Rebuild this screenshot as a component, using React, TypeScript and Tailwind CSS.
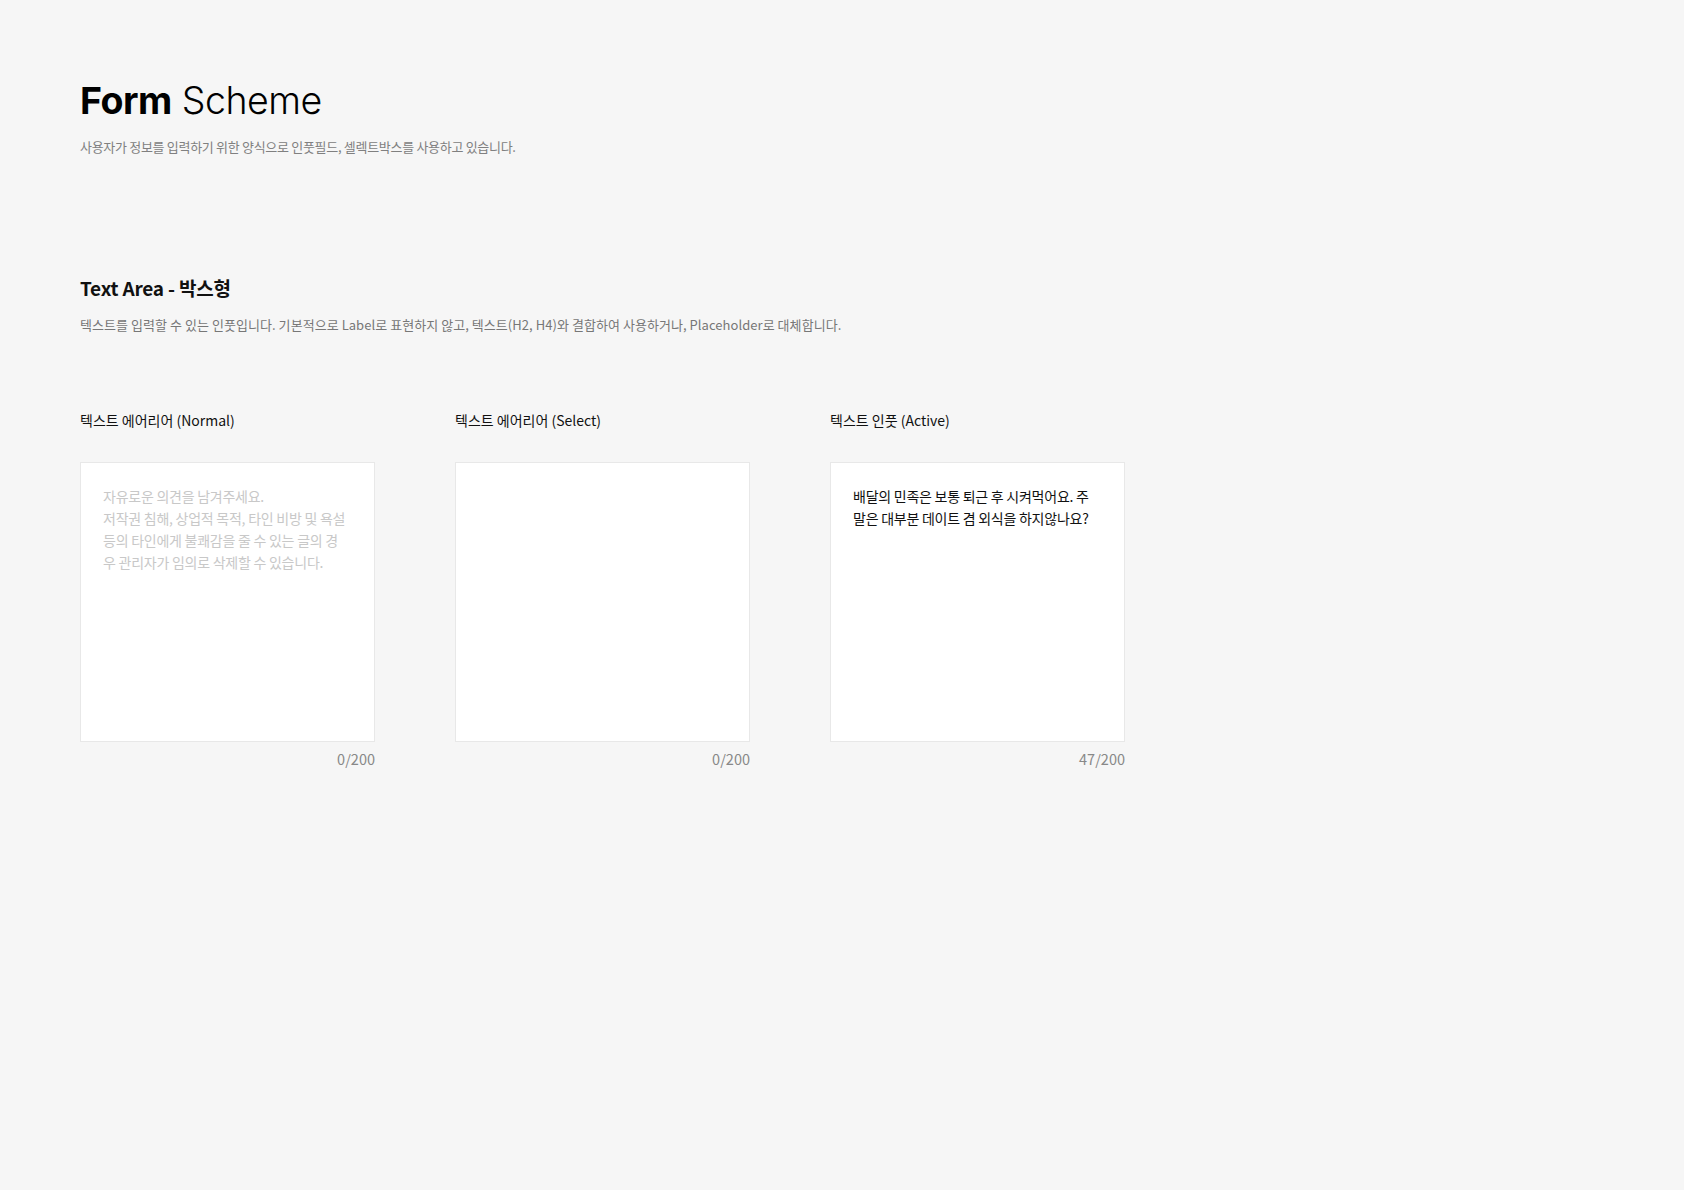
const KR = "font-['Noto_Sans_CJK_KR','Noto_Sans',sans-serif]";

interface AreaProps {
  label: string;
  value?: string;
  placeholder?: string;
  max: number;
}

function TextAreaBox({ label, value, placeholder, max }: AreaProps) {
  const count = value ? value.length : 0;
  return (
    <div className="flex w-[295px] flex-col">
      <label className="text-[14px] leading-5 text-[#111]">{label}</label>
      <div className="mt-[32px] h-[280px] border border-[#e8e8e8] bg-white py-[22px] pl-[22px] pr-[26px]">
        {value ? (
          <p className="text-[14px] leading-[22px] tracking-[-0.25px] text-[#111]">{value}</p>
        ) : (
          <p className="whitespace-pre-wrap text-[14px] leading-[22px] tracking-[-0.25px] text-[#c8c8c8]">
            {placeholder}
          </p>
        )}
      </div>
      <span className="mt-[7px] text-right text-[14.5px] leading-5 text-[#888]">
        {count}/{max}
      </span>
    </div>
  );
}

export default function App() {
  return (
    <div className={`min-h-[1190px] bg-[#f6f6f6] pl-[80px] pt-[77px] ${KR}`}>
      <h1 className="font-['Inter',sans-serif] text-[37.5px] leading-[48px] tracking-[-0.5px] text-black">
        <span className="font-bold">Form</span>{" "}
        <span className="font-light">Scheme</span>
      </h1>
      <p className="mt-[12px] text-[13px] leading-5 tracking-[-0.3px] text-[#808080]">
        사용자가 정보를 입력하기 위한 양식으로 인풋필드, 셀렉트박스를 사용하고 있습니다.
      </p>

      <h2 className="mt-[117px] text-[19px] font-bold leading-7 tracking-[-0.2px] text-[#111]">
        Text Area - 박스형
      </h2>
      <p className="mt-[13px] text-[13px] leading-5 tracking-[0.05px] text-[#777]">
        텍스트를 입력할 수 있는 인풋입니다. 기본적으로 Label로 표현하지 않고, 텍스트(H2, H4)와
        결합하여 사용하거나, Placeholder로 대체합니다.
      </p>

      <div className="mt-[75px] flex gap-[80px]">
        <TextAreaBox
          label="텍스트 에어리어 (Normal)"
          placeholder={
            "자유로운 의견을 남겨주세요.\n저작권 침해, 상업적 목적, 타인 비방 및 욕설 등의 타인에게 불쾌감을 줄 수 있는 글의 경우 관리자가 임의로 삭제할 수 있습니다."
          }
          max={200}
        />
        <TextAreaBox label="텍스트 에어리어 (Select)" max={200} />
        <TextAreaBox
          label="텍스트 인풋 (Active)"
          value="배달의 민족은 보통 퇴근 후 시켜먹어요. 주말은 대부분 데이트 겸 외식을 하지않나요?"
          max={200}
        />
      </div>
    </div>
  );
}
